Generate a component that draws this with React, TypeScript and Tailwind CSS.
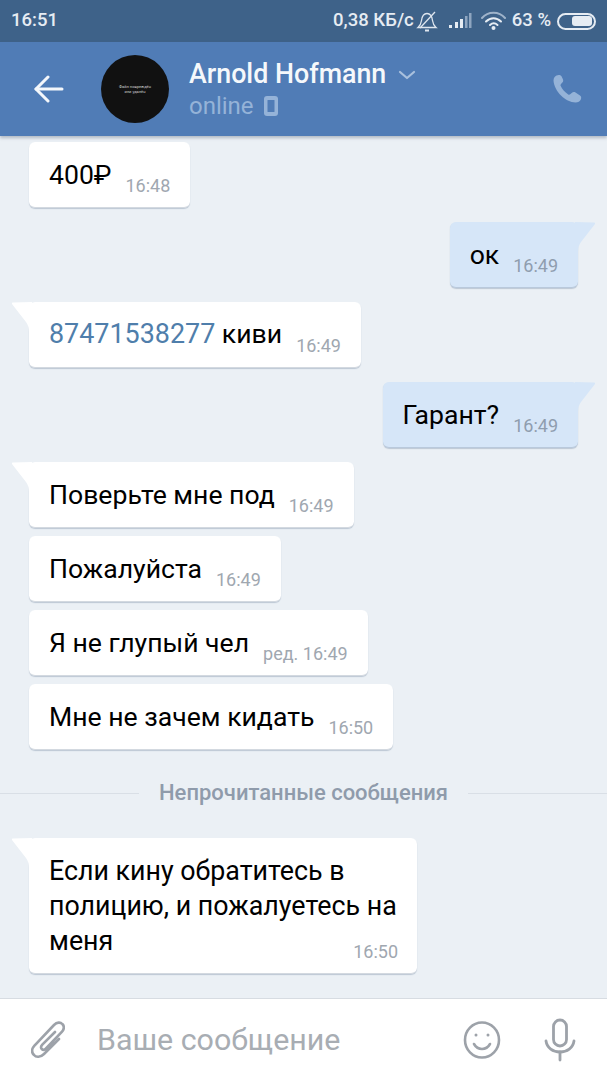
import type { ReactNode } from "react";

type BubbleProps = {
  time: string;
  out?: boolean;
  tail?: boolean;
  children: ReactNode;
};

function LeftTail() {
  return (
    <svg className="absolute left-[-17px] top-0" width="20" height="34" viewBox="0 0 20 34">
      <path d="M1 0.500 Q-1 0.500 0 2 L14 20 Q17 24 17 30 L17 34 L20 34 L20 0 Z" fill="#ffffff" />
    </svg>
  );
}

function RightTail() {
  return (
    <svg className="absolute right-[-17px] top-0" width="20" height="34" viewBox="0 0 20 34">
      <path d="M19 0.500 Q21 0.500 20 2 L6 20 Q3 24 3 30 L3 34 L0 34 L0 0 Z" fill="#d6e6f8" />
    </svg>
  );
}

function Bubble({ time, out = false, tail = false, children }: BubbleProps) {
  return (
    <div
      className={`relative flex h-[66px] items-end gap-[14px] rounded-[6px] border-b pb-[11px] pl-[20px] pr-[20px] pt-[14px] shadow-[0_1px_1px_rgba(120,140,165,0.4)] ${
        out ? "self-end border-[#b9c9dc] bg-[#d6e6f8]" : "self-start border-[#d3d9e0] bg-white"
      }`}
    >
      {tail && !out ? <LeftTail /> : null}
      {tail && out ? <RightTail /> : null}
      <span className="mb-[4px] text-[26.600px] leading-[35px] text-black">{children}</span>
      <span className={`text-[18px] leading-[20px] ${out ? "text-[#8f9dae]" : "text-[#a0a7b0]"}`}>{time}</span>
    </div>
  );
}

function StatusIcons() {
  return (
    <div className="flex items-center text-[18.500px] font-medium text-[#e6ecf3]">
      <span>0,38 КБ/с</span>
      <svg className="ml-[1px]" width="24" height="24" viewBox="0 0 24 24" fill="none" stroke="#dfe6ef" strokeWidth="1.3">
        <path d="M3 18.500h18c-2.500-2-3-3.500-3.500-7-.5-4-2.500-7-5.500-7-3 0-5 3-5.500 7-.5 3.500-1 5-3.500 7Z" />
        <path d="M20 3 5 19" />
        <path d="M10 21.500h4" strokeWidth="2" />
      </svg>
      <svg className="ml-[9px]" width="24" height="18" viewBox="0 0 24 18">
        <rect x="1" y="13" width="3" height="3" fill="#e6ecf3" />
        <rect x="7" y="10" width="3" height="6" fill="#e6ecf3" />
        <rect x="12" y="7" width="3" height="9" fill="#e6ecf3" />
        <rect x="17" y="4" width="2.500" height="12" fill="#8ea5c0" />
        <rect x="21" y="1" width="2.500" height="15" fill="#8ea5c0" />
      </svg>
      <svg className="ml-[9px]" width="26" height="20" viewBox="0 0 26 20" fill="none" strokeLinecap="round">
        <path d="M1 7C7 0 18 0 24 7" stroke="#9fb3ca" strokeWidth="2" />
        <path d="M5 10.500C9.500 6 15.500 6 20 10.500" stroke="#e6ecf3" strokeWidth="2" />
        <path d="M9 14c2.500-2.300 5-2.300 7.500 0" stroke="#e6ecf3" strokeWidth="2" />
        <circle cx="12.500" cy="17" r="2" fill="#e6ecf3" />
      </svg>
      <span className="ml-[5px]">63 %</span>
      <div className="ml-[6px] flex h-[17px] w-[39px] items-center rounded-full border-2 border-[#e6ecf3] pl-[13px]">
        <div className="h-[10px] w-[20px] rounded-[3px] bg-[#e6ecf3]" />
      </div>
    </div>
  );
}

export default function App() {
  return (
    <div className="flex h-[1080px] w-[607px] flex-col overflow-hidden bg-[#ebf0f5] font-['Roboto',sans-serif]">
      <div className="flex h-[42px] items-center justify-between bg-[#3e6289] pl-[11px] pr-[11px]">
        <span className="text-[18.500px] font-medium text-[#e6ecf3]">16:51</span>
        <StatusIcons />
      </div>

      <header className="z-10 flex h-[94px] items-center bg-[#507cb6] shadow-[0_2px_3px_rgba(70,85,105,0.35)]">
        <svg className="ml-[34px]" width="30" height="28" viewBox="0 0 30 28" fill="none" stroke="#f4f7fb" strokeWidth="3" strokeLinecap="round" strokeLinejoin="round">
          <path d="M14 2 2 14l12 12" />
          <path d="M2 14h26" />
        </svg>
        <div className="ml-[37px] flex h-[68px] w-[68px] flex-col items-center justify-center rounded-full bg-[#111111] text-center text-[4px] leading-[5px] text-[#d0d0d0]">
          <span>Файл повреждён</span>
          <span>или удалён</span>
        </div>
        <div className="ml-[20px] flex-1">
          <div className="flex items-center">
            <span className="text-[26.800px] font-medium leading-[34px] text-[#f5f8fb]">Arnold Hofmann</span>
            <svg className="ml-[12px] mt-[1px]" width="18" height="10" viewBox="0 0 18 10" fill="none" stroke="#a9c0dd" strokeWidth="2.200" strokeLinecap="round" strokeLinejoin="round">
              <path d="M2 2l7 6 7-6" />
            </svg>
          </div>
          <div className="flex items-center">
            <span className="text-[24px] leading-[30px] text-[#95b3d8]">online</span>
            <svg className="ml-[10px]" width="14" height="20" viewBox="0 0 14 20" fill="none">
              <rect x="0" y="0" width="14" height="20" rx="3" fill="#95b3d8" />
              <rect x="3.500" y="4" width="7" height="12" rx="0.500" fill="#507cb6" />
            </svg>
          </div>
        </div>
        <svg className="mr-[25px]" width="30" height="30" viewBox="0 0 30 30" fill="#95b3d8">
          <path d="M4.500 1.500c-1.500.7-3 2.500-3 5 .3 5.500 3.500 11 7.500 15 4 3.800 9.500 7 14.500 7 2.500 0 4.500-1.300 5.300-3 .8-1.800.4-3.200-.8-4l-4.500-3c-1.300-.8-2.700-.6-3.800.4l-1.500 1.400c-.6.500-1.300.5-2 .1-1.700-1-3.300-2.300-4.600-3.800-1.200-1.400-2.200-3-3-4.800-.3-.7-.2-1.300.4-1.900l1.300-1.300c1-1 1.200-2.400.5-3.700L9.500 2.300C8.500.8 6.300.7 4.500 1.500Z" />
        </svg>
      </header>

      <main className="flex flex-1 flex-col px-[29px] pt-[6px]">
        <Bubble time="16:48">400₽</Bubble>
        <div className="mt-[14px] flex flex-col gap-[14px]">
          <Bubble time="16:49" out tail>ок</Bubble>
          <Bubble time="16:49" tail>
            <span className="text-[26.900px] text-[#4f7eab]">87471538277</span> киви
          </Bubble>
          <Bubble time="16:49" out tail>Гарант?</Bubble>
        </div>
        <div className="mt-[14px] flex flex-col gap-[8px]">
          <Bubble time="16:49" tail>Поверьте мне под</Bubble>
          <Bubble time="16:49">Пожалуйста</Bubble>
          <Bubble time="ред. 16:49">Я не глупый чел</Bubble>
          <Bubble time="16:50">Мне не зачем кидать</Bubble>
        </div>

        <div className="-mx-[29px] mt-[31px] flex items-center">
          <div className="h-px flex-1 bg-[#d9dfe6]" />
          <span className="mx-[20px] text-[22px] font-medium leading-[24px] text-[#8f9bab]">Непрочитанные сообщения</span>
          <div className="h-px flex-1 bg-[#d9dfe6]" />
        </div>

        <div className="relative mt-[33px] flex w-[388px] flex-col rounded-[6px] border-b border-[#d3d9e0] bg-white pb-[11px] pl-[20px] pr-[19px] pt-[16px] shadow-[0_1px_1px_rgba(120,140,165,0.4)]">
          <LeftTail />
          <p className="text-[26.800px] leading-[35px] text-black">Если кину обратитесь в полицию, и пожалуетесь на</p>
          <div className="flex items-end justify-between">
            <span className="mb-[3px] text-[26.800px] leading-[35px] text-black">меня</span>
            <span className="text-[18px] leading-[20px] text-[#a0a7b0]">16:50</span>
          </div>
        </div>
      </main>

      <footer className="flex h-[82px] items-center border-t border-[#d7dce2] bg-white">
        <svg className="ml-[31px]" width="34" height="40" viewBox="0 0 34 40" fill="none" stroke="#9da2a9" strokeWidth="2.600" strokeLinecap="round">
          <path d="M28 19 13 34c-3.500 3.500-8 3.500-10 1-2.500-2.500-2.500-6 .5-9.500L23 5c3-3 6.500-3 8.300-1 2 2 2 5-.5 8L15 28.500c-1.500 1.500-3.200 1.500-4.300.5-1-1.200-.8-2.800.6-4.300L24 12" />
        </svg>
        <span className="ml-[32px] flex-1 text-[30.400px] text-[#a8adb3]">Ваше сообщение</span>
        <svg width="38" height="38" viewBox="0 0 38 38" fill="none" stroke="#9da2a9" strokeWidth="2.600" strokeLinecap="round">
          <ellipse cx="19" cy="19" rx="17" ry="17.500" />
          <path d="M11 23c2 3.500 5 5 8 5s6-1.500 8-5" />
          <circle cx="13" cy="14" r="1.500" fill="#9da2a9" stroke="none" />
          <circle cx="25" cy="14" r="1.500" fill="#9da2a9" stroke="none" />
        </svg>
        <svg className="ml-[43px] mr-[31px]" width="32" height="44" viewBox="0 0 32 44" fill="none" stroke="#9da2a9" strokeWidth="2.800" strokeLinecap="round">
          <rect x="9.500" y="2" width="13" height="26" rx="6.500" />
          <path d="M2 23c1 7 7 11 14 11s13-4 14-11" />
          <path d="M16 34v8" />
        </svg>
      </footer>
    </div>
  );
}
